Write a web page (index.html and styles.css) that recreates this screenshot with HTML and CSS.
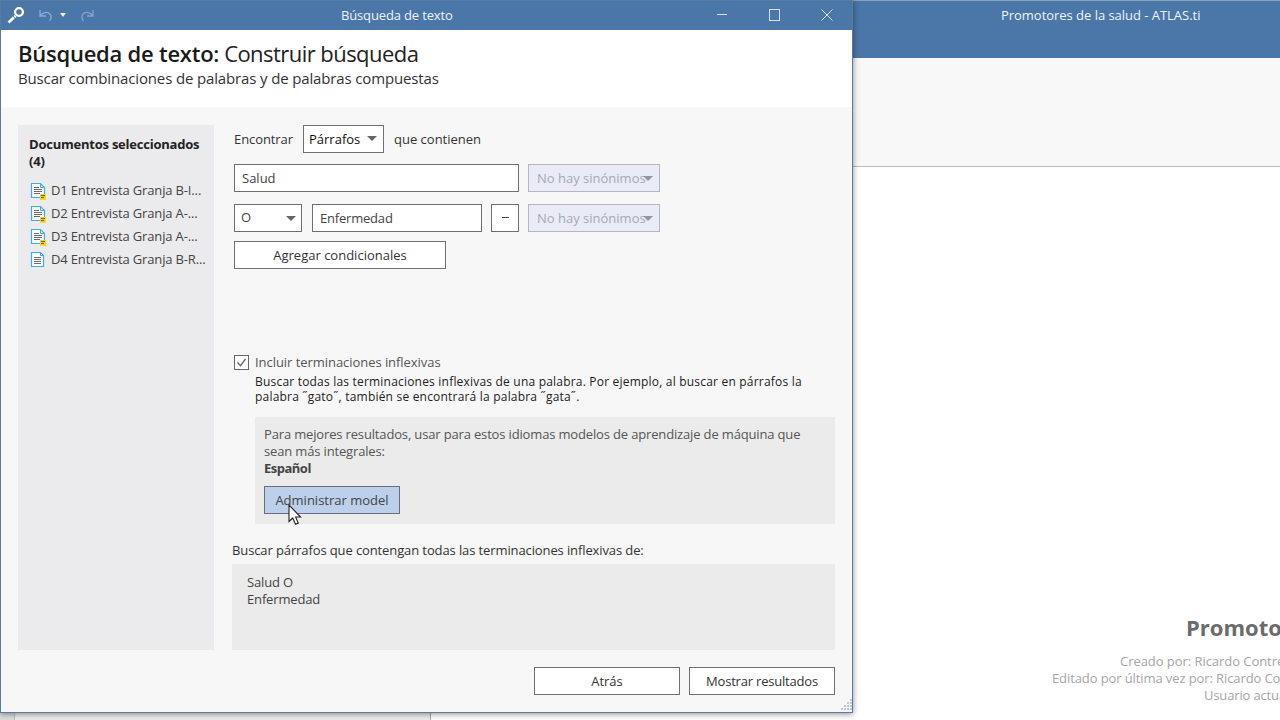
FILE: index.html
```
<!DOCTYPE html>
<html lang="es"><head>
    <meta charset="utf-8">
    <meta name="viewport" content="width=device-width, initial-scale=1.0">
    <title>Búsqueda de texto</title>
    <link rel="stylesheet" href="styles.css">
</head>
<body>
    <div id="app">
        <div class="app-title"><span>Promotores de la salud - ATLAS.ti</span></div>
        <div class="ribbon"></div>
        <div class="workspace">
            <div class="project">
                <h2><span>Promotores de la salud</span></h2>
                <p class="created"><span>Creado por: Ricardo Contreras</span></p>
                <p class="edited"><span>Editado por última vez por: Ricardo Contreras</span></p>
                <p class="user"><span>Usuario actual: Ricardo</span></p>
            </div>
        </div>
        <div class="app-bottom"><div class="gutter"></div><div class="pane"></div><div class="blank"></div></div>
    </div>

    <div id="dialog">
        <div class="titlebar">
            <div class="tools">
                <svg class="magnifier" width="18" height="18" viewBox="0 0 18 18"><circle cx="12" cy="6" r="3.900" fill="none" stroke="#fff" stroke-width="2.300"/><path d="M8.600 9.900L1.500 16.500" stroke="#fff" stroke-width="2.700" stroke-dasharray="1.600 .8 9"/></svg>
                <svg class="undo" width="14" height="13" viewBox="0 0 14 13"><path d="M1 1v6h6M1.200 6.600C4 3.200 8 2.600 10.400 4.600C12.600 6.500 12.700 9 10.500 11.800" fill="none" stroke="#8fabd0" stroke-width="1.300"/></svg>
                <svg class="caret" width="6" height="4" viewBox="0 0 6 4"><path d="M0 0h6L3 4z" fill="#e8eef6"/></svg>
                <svg class="redo" width="14" height="13" viewBox="0 0 14 13"><path d="M13 1v6H7M12.800 6.600C10 3.200 6 2.600 3.600 4.600C1.400 6.500 1.300 9 3.500 11.800" fill="none" stroke="#86a4cb" stroke-width="1.300"/></svg>
            </div>
            <div class="caption"><span>Búsqueda de texto</span></div>
            <div class="controls">
                <svg width="12" height="12" viewBox="0 0 12 12"><path d="M2 5.500h10" stroke="#d5e0ee"/></svg>
                <svg width="12" height="12" viewBox="0 0 12 12"><rect x="1.500" y=".5" width="10" height="11" fill="none" stroke="#d5e0ee"/></svg>
                <svg width="12" height="12" viewBox="0 0 12 12"><path d="M.5.5l11 11M11.500.5l-11 11" stroke="#d5e0ee"/></svg>
            </div>
        </div>
        <div class="header">
            <h1><b>Búsqueda de texto:</b><span>Construir búsqueda</span></h1>
            <p><span>Buscar combinaciones de palabras y de palabras compuestas</span></p>
        </div>
        <div class="content">
            <div class="sidebar">
                <h3>Documentos seleccionados (4)</h3>
                <ul>
                    <li><svg width="18" height="18" viewBox="0 0 18 18"><path d="M2.500 1.500h9l4 4v10h-13z" fill="#fafcfd" stroke="#41aed3" stroke-width="1.200"/><path d="M11.500 1.500v4h4" fill="none" stroke="#41aed3"/><path d="M5 5.500h5M5 7.500h8M5 9.500h8M5 11.500h6" stroke="#6b6b6b"/><path d="M11 12h6v6h-6z" fill="#f5d327"/><path d="M12 13.500h4M12 15.500h3" stroke="#6f5e10"/></svg><span>D1 Entrevista Granja B-I...</span></li>
                    <li><svg width="18" height="18" viewBox="0 0 18 18"><path d="M2.500 1.500h9l4 4v10h-13z" fill="#fafcfd" stroke="#41aed3" stroke-width="1.200"/><path d="M11.500 1.500v4h4" fill="none" stroke="#41aed3"/><path d="M5 5.500h5M5 7.500h8M5 9.500h8M5 11.500h6" stroke="#6b6b6b"/><path d="M11 12h6v6h-6z" fill="#f5d327"/><path d="M12 13.500h4M12 15.500h3" stroke="#6f5e10"/></svg><span>D2 Entrevista Granja A-...</span></li>
                    <li><svg width="18" height="18" viewBox="0 0 18 18"><path d="M2.500 1.500h9l4 4v10h-13z" fill="#fafcfd" stroke="#41aed3" stroke-width="1.200"/><path d="M11.500 1.500v4h4" fill="none" stroke="#41aed3"/><path d="M5 5.500h5M5 7.500h8M5 9.500h8M5 11.500h6" stroke="#6b6b6b"/><path d="M11 12h6v6h-6z" fill="#f5d327"/><path d="M12 13.500h4M12 15.500h3" stroke="#6f5e10"/></svg><span>D3 Entrevista Granja A-...</span></li>
                    <li><svg width="18" height="18" viewBox="0 0 18 18"><path d="M2.500 1.500h9l3 3v11h-12z" fill="#fafcfd" stroke="#41aed3" stroke-width="1.200"/><path d="M11.500 1.500v3h3" fill="none" stroke="#41aed3"/><path d="M5 6.500h7M5 8.500h7M5 10.500h7M5 12.500h7" stroke="#6b6b6b"/></svg><span>D4 Entrevista Granja B-R...</span></li>
                </ul>
            </div>
            <div class="main">
                <div class="row scope">
                    <span class="label find">Encontrar</span>
                    <div class="box select scope-select"><span>Párrafos</span><i class="arrow"></i></div>
                    <span class="label">que contienen</span>
                </div>
                <div class="row">
                    <div class="box input first"><span>Salud</span></div>
                    <div class="box select synonyms"><span>No hay sinónimos</span><i class="arrow"></i></div>
                </div>
                <div class="row">
                    <div class="box select operator"><span>O</span><i class="arrow"></i></div>
                    <div class="box input second"><span>Enfermedad</span></div>
                    <div class="box minus"><i></i></div>
                    <div class="box select synonyms"><span>No hay sinónimos</span><i class="arrow"></i></div>
                </div>
                <div class="box button add"><span>Agregar condicionales</span></div>

                <div class="inflected">
                    <svg class="check" width="15" height="15" viewBox="0 0 15 15"><rect x=".5" y=".5" width="14" height="14" fill="#fff" stroke="#666"/><path d="M3.500 7.500l3 3.200 5-6.700" fill="none" stroke="#666" stroke-width="1.300"/></svg>
                    <div class="inflected-text">
                        <p class="option"><span>Incluir terminaciones inflexivas</span></p>
                        <p class="hint"><span>Buscar todas las terminaciones inflexivas de una palabra. Por ejemplo, al buscar en párrafos la</span><br><span>palabra ˝gato˝, también se encontrará la palabra ˝gata˝.</span></p>
                        <div class="notice">
                            <p><span>Para mejores resultados, usar para estos idiomas modelos de aprendizaje de máquina que</span><br><span>sean más integrales:</span><br><b>Español</b></p>
                            <div class="box button manage"><span>Administrar model</span>
                                <svg class="cursor" width="14" height="22" viewBox="0 0 14 22"><path d="M1 1v16.500l3.800-3.500 2.700 6.300 2.800-1.200-2.700-6.100h5z" fill="#fff" stroke="#222" stroke-width="1.100"/></svg>
                            </div>
                        </div>
                    </div>
                </div>

                <p class="summary-label"><span>Buscar párrafos que contengan todas las terminaciones inflexivas de:</span></p>
                <div class="summary"><span>Salud O</span><br><span>Enfermedad</span></div>
            </div>
        </div>
        <div class="footer">
            <div class="box button"><span>Atrás</span></div>
            <div class="box button results"><span>Mostrar resultados</span></div>
        </div>
        <svg class="grip" width="13" height="13" viewBox="0 0 13 13"><path d="M11 1h2M8 4h2M11 4h2M5 7h2M8 7h2M11 7h2M2 10h2M5 10h2M8 10h2M11 10h2" stroke="#a9bbd3" stroke-width="1.500"/></svg>
    </div>
</body></html>
```

FILE: styles.css
```
* {
    box-sizing: border-box;
}

body {
    margin: 0;
    width: 1280px;
    height: 720px;
    overflow: hidden;
    position: relative;
    font-family: "Open Sans", "Noto Sans", sans-serif;
    font-size: 13px;
    color: #333;
    background-color: #fff;
}

h1, h2, h3, p, ul {
    margin: 0;
    padding: 0;
    font-weight: normal;
}

span, b {
    white-space: nowrap;
}

svg {
    display: block;
    flex: none;
}

/* main window behind the dialog */
#app {
    display: flex;
    flex-direction: column;
    height: 720px;
}

.app-title {
    height: 58px;
    padding: 4px 0 0 1001px;
    line-height: 20px;
    letter-spacing: -0.03px;
    color: #eef3f9;
    background-color: #4a76a8;
    border-top: 1px solid #8ba0b9;
}

.ribbon {
    height: 109px;
    background-color: #f8f8f8;
    border-bottom: 1px solid #bbb;
}

.workspace {
    flex: 1;
    padding: 446px 0 0 853px;
    overflow: hidden;
}

.project {
    display: flex;
    flex-direction: column;
    line-height: 17px;
    color: #a6a6a6;
}

.project h2 {
    padding-left: 333px;
    line-height: 28px;
    margin-bottom: 12px;
    font-size: 22px;
    font-weight: bold;
    color: #6b6b6b;
}

.created {
    padding-left: 267px;
    letter-spacing: -0.05px;
}

.edited {
    padding-left: 199px;
    letter-spacing: -0.1px;
}

.user {
    padding-left: 351px;
    letter-spacing: -0.15px;
}

.app-bottom {
    display: flex;
    height: 7px;
}

.gutter {
    width: 15px;
    border-right: 1px solid #bbb;
    background-color: #dcdcdf;
}

.pane {
    width: 416px;
    border-right: 1px solid #aaa;
    background-color: #ececec;
}

/* dialog window */
#dialog {
    position: absolute;
    left: 0;
    top: 0;
    width: 853px;
    height: 713px;
    display: flex;
    flex-direction: column;
    background-color: #f7f7f7;
    border: 1px solid #587aa3;
    box-shadow: 0 1px 6px rgba(0, 0, 0, 0.45);
}

.titlebar {
    display: flex;
    align-items: center;
    height: 29px;
    padding-bottom: 1px;
    color: #eef3f9;
    background-color: #4a76a8;
}

.tools {
    display: flex;
    align-items: center;
    width: 340px;
    padding-left: 6px;
}

.undo {
    margin-left: 14px;
}

.caret {
    margin: 0 14px 0 7px;
}

.caption {
    flex: 1;
    line-height: 20px;
    letter-spacing: -0.15px;
}

.controls {
    display: flex;
    gap: 41px;
    padding-right: 19px;
}

.header {
    height: 77px;
    padding: 8px 0 0 17px;
    background-color: #fff;
}

.header h1 {
    display: flex;
    gap: 5px;
    font-size: 22px;
    line-height: 30px;
    color: #222;
}

.header b {
    font-weight: 600;
    letter-spacing: -0.24px;
    color: #1a1a1a;
}

.header h1 span {
    letter-spacing: -0.55px;
}

.header p {
    font-size: 15px;
    line-height: 21px;
    letter-spacing: -0.14px;
}

.content {
    display: flex;
    gap: 18px;
    height: 543px;
    padding: 18px 17px 0 17px;
}

.sidebar {
    width: 196px;
    height: 525px;
    padding: 11px 11px 0 11px;
    background-color: #ebebed;
}

.sidebar h3 {
    font-size: 13px;
    line-height: 17px;
    font-weight: bold;
    letter-spacing: -0.23px;
    color: #222;
}

.sidebar ul {
    margin-top: 9px;
    list-style: none;
    letter-spacing: -0.15px;
    color: #444;
}

.sidebar li {
    display: flex;
    align-items: center;
    gap: 4px;
    height: 22.8px;
}

.sidebar li svg {
    margin-top: 2px;
}

.main {
    flex: 1;
}

.row {
    display: flex;
    align-items: center;
    margin: 0 0 12px 2px;
}

.box {
    display: flex;
    align-items: center;
    height: 28px;
    background-color: #fff;
    border: 1px solid #707070;
}

.select {
    justify-content: space-between;
    padding: 0 6px;
}

.arrow {
    border: 5px solid transparent;
    border-top-color: #666;
    border-bottom: 0;
}

.scope {
    margin-bottom: 11px;
}

.label {
    padding-bottom: 1px;
}

.find {
    width: 58px;
    letter-spacing: -0.08px;
}

.scope-select {
    width: 81px;
    margin: 0 10px 0 11px;
    padding: 0 6px 1px 5px;
    color: #111;
}

.input {
    padding-left: 7px;
    color: #444;
}

.first {
    width: 285px;
}

.operator {
    width: 68px;
    padding-right: 5px;
    color: #444;
}

.operator span {
    padding-bottom: 3px;
}

.second {
    width: 170px;
    margin: 0 9px 0 10px;
    letter-spacing: -0.2px;
}

.minus {
    width: 28px;
    justify-content: center;
}

.minus i {
    width: 7px;
    height: 1px;
    background-color: #444;
    margin-bottom: 2px;
}

.synonyms {
    width: 132px;
    margin-left: 9px;
    padding-left: 8px;
    color: #a6a8b3;
    background-color: #e9ecf6;
    border-color: #b4b7c2;
}

.synonyms .arrow {
    margin-left: -6px;
    border-top-color: #9496a0;
}

.button {
    justify-content: center;
    padding-bottom: 1px;
}

.add {
    width: 212px;
    margin: -3px 0 0 2px;
}

.inflected {
    display: flex;
    gap: 6px;
    margin: 83px 0 0 2px;
}

.check {
    margin-top: 3px;
}

.inflected-text {
    flex: 1;
}

.option {
    line-height: 20px;
    letter-spacing: -0.05px;
    color: #555;
}

.hint {
    margin-top: 2px;
    font-size: 12px;
    line-height: 15px;
    letter-spacing: 0.2px;
    color: #222;
}

.notice {
    height: 107px;
    margin-top: 13px;
    padding: 9px;
    line-height: 17px;
    color: #555;
    background-color: #ebebeb;
}

.notice p {
    letter-spacing: -0.155px;
}

.notice b {
    letter-spacing: -0.5px;
    color: #444;
}

.manage {
    position: relative;
    width: 136px;
    margin-top: 9px;
    padding-bottom: 0;
    color: #444;
    background-color: #bcd0ec;
    border-color: #666f7d;
}

.cursor {
    position: absolute;
    left: 23px;
    top: 17px;
}

.summary-label {
    margin-top: 16px;
    line-height: 20px;
    letter-spacing: -0.11px;
}

.summary {
    height: 86px;
    margin-top: 4px;
    padding: 10px 15px;
    line-height: 17px;
    letter-spacing: -0.15px;
    color: #444;
    background-color: #ebebeb;
}

.footer {
    display: flex;
    justify-content: flex-end;
    gap: 9px;
    padding: 17px 17px 0 0;
}

.footer .button {
    width: 146px;
}

.results {
    letter-spacing: -0.2px;
}

.grip {
    position: absolute;
    right: 0;
    bottom: 0;
}
```
